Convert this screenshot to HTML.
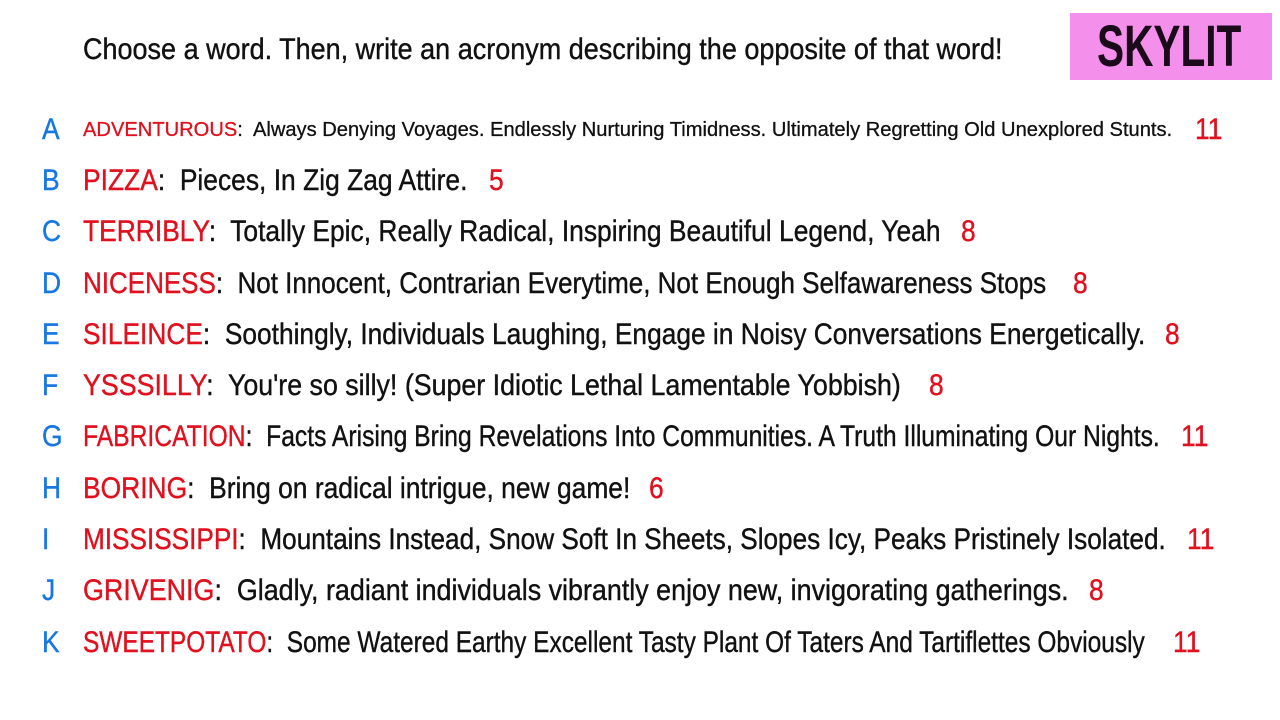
<!DOCTYPE html>
<html><head><meta charset="utf-8"><style>
html,body{margin:0;padding:0;background:#fff;width:1280px;height:720px;overflow:hidden;position:relative;font-family:"Liberation Sans",sans-serif;}
.s{display:inline-block;transform-origin:0 50%;white-space:nowrap;}
.t{position:absolute;left:83px;top:30px;font-size:30px;line-height:40px;color:#111;transform:scaleX(0.9);-webkit-text-stroke:0.4px #111;}
.logo{position:absolute;left:1070px;top:13px;width:202px;height:67px;background:#f490ec;}
.logo span{position:absolute;left:27px;top:0;line-height:67px;font-size:58px;font-weight:bold;color:#1a0a1a;transform:scaleX(0.7);transform-origin:0 50%;}
.r{position:absolute;left:0;height:40px;line-height:40px;width:1280px;font-size:30px;white-space:nowrap;color:#111;-webkit-text-stroke:0.4px currentColor;}
.r>span{position:absolute;top:0;transform:scaleX(0.88);transform-origin:0 50%;}
.r .l{left:42px;color:#1877e0;}
.r .w{left:83px;}
.r .w b{font-weight:normal;color:#e0101e;}
.r .n{color:#e0101e;}
.r .a{font-size:20px;transform:scaleX(1.006);-webkit-text-stroke:0.3px currentColor;}
</style></head><body>
<div class="t s">Choose a word. Then, write an acronym describing the opposite of that word!</div>
<div class="logo"><span>SKYLIT</span></div>

<div class="r" style="top:110px"><span class="l">A</span><span class="w a"><b>ADVENTUROUS</b>:&nbsp; Always Denying Voyages. Endlessly Nurturing Timidness. Ultimately Regretting Old Unexplored Stunts.</span><span class="n" style="left:1195px">11</span></div>
<div class="r" style="top:161px"><span class="l">B</span><span class="w"><b>PIZZA</b>:&nbsp; Pieces, In Zig Zag Attire.</span><span class="n" style="left:489px">5</span></div>
<div class="r" style="top:212px"><span class="l">C</span><span class="w"><b>TERRIBLY</b>:&nbsp; Totally Epic, Really Radical, Inspiring Beautiful Legend, Yeah</span><span class="n" style="left:961px">8</span></div>
<div class="r" style="top:264px"><span class="l">D</span><span class="w" style="transform:scaleX(0.866)"><b>NICENESS</b>:&nbsp; Not Innocent, Contrarian Everytime, Not Enough Selfawareness Stops</span><span class="n" style="left:1073px">8</span></div>
<div class="r" style="top:315px"><span class="l">E</span><span class="w" style="transform:scaleX(0.877)"><b>SILEINCE</b>:&nbsp; Soothingly, Individuals Laughing, Engage in Noisy Conversations Energetically.</span><span class="n" style="left:1165px">8</span></div>
<div class="r" style="top:366px"><span class="l">F</span><span class="w" style="transform:scaleX(0.893)"><b>YSSSILLY</b>:&nbsp; You're so silly! (Super Idiotic Lethal Lamentable Yobbish)</span><span class="n" style="left:929px">8</span></div>
<div class="r" style="top:417px"><span class="l">G</span><span class="w" style="transform:scaleX(0.822)"><b>FABRICATION</b>:&nbsp; Facts Arising Bring Revelations Into Communities. A Truth Illuminating Our Nights.</span><span class="n" style="left:1181px">11</span></div>
<div class="r" style="top:469px"><span class="l">H</span><span class="w"><b>BORING</b>:&nbsp; Bring on radical intrigue, new game!</span><span class="n" style="left:649px">6</span></div>
<div class="r" style="top:520px"><span class="l">I</span><span class="w" style="transform:scaleX(0.872)"><b>MISSISSIPPI</b>:&nbsp; Mountains Instead, Snow Soft In Sheets, Slopes Icy, Peaks Pristinely Isolated.</span><span class="n" style="left:1187px">11</span></div>
<div class="r" style="top:571px"><span class="l">J</span><span class="w" style="transform:scaleX(0.896)"><b>GRIVENIG</b>:&nbsp; Gladly, radiant individuals vibrantly enjoy new, invigorating gatherings.</span><span class="n" style="left:1089px">8</span></div>
<div class="r" style="top:623px"><span class="l">K</span><span class="w" style="transform:scaleX(0.815)"><b>SWEETPOTATO</b>:&nbsp; Some Watered Earthy Excellent Tasty Plant Of Taters And Tartiflettes Obviously</span><span class="n" style="left:1173px">11</span></div>
</body></html>
